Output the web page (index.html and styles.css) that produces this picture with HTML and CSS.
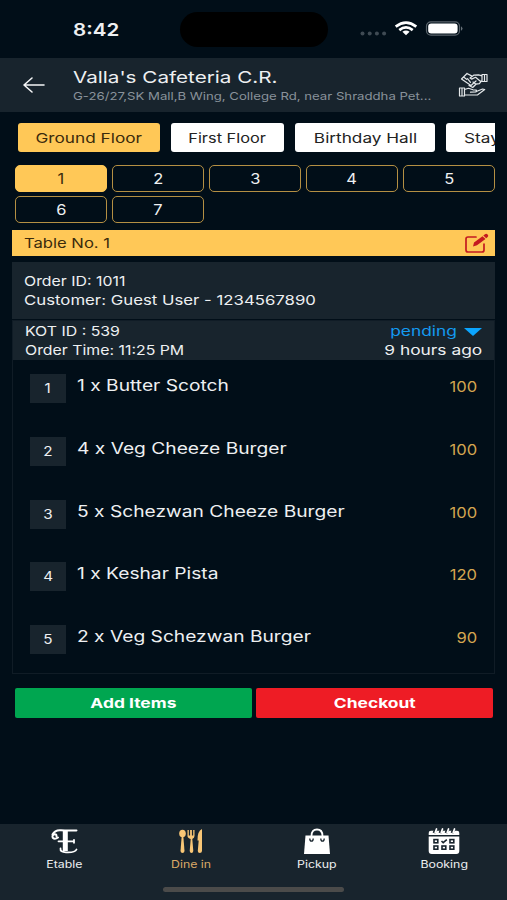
FILE: index.html
```html
<!DOCTYPE html>
<html lang="en">

<head>
    <meta charset="utf-8">
    <meta name="viewport" content="width=device-width, initial-scale=1.0">
    <title>Dine in</title>
    <link rel="stylesheet" href="styles.css">
</head>

<body>
    <div class="status">
        <span class="clock"><span class="wide">8:42</span></span>
        <div class="island"></div>
        <svg class="status-icons" width="104" height="20" viewBox="0 0 104 20">
            <g fill="#3f4a53">
                <circle cx="3.5" cy="14.5" r="2" />
                <circle cx="10.7" cy="14.5" r="2" />
                <circle cx="17.9" cy="14.5" r="2" />
                <circle cx="25.1" cy="14.5" r="2" />
            </g>
            <g fill="none" stroke="#fff" stroke-width="2.7">
                <path d="M36.7 7.6Q47 -.5 57.3 7.6" />
                <path d="M40.3 11.1Q47 5.6 53.7 11.1" />
            </g>
            <path d="M43.4 12.7Q47 10.2 50.6 12.7L47 16.2Z" fill="#fff" />
            <rect x="67.5" y="2.8" width="33" height="13.4" rx="4.4" fill="none" stroke="#59636b" stroke-width="1.2" />
            <rect x="69.2" y="4.5" width="29.4" height="10" rx="3" fill="#fff" />
            <path d="M102 7.2Q105 9.5 102 11.8Z" fill="#68727a" />
        </svg>
    </div>

    <header>
        <svg class="back" width="24" height="18" viewBox="0 0 24 18" fill="none" stroke="#f4f5f6" stroke-width="1.6" stroke-linecap="round" stroke-linejoin="round">
            <path d="M22 9H2M10 2L2 9l8 7" />
        </svg>
        <div class="place">
            <h1><span class="wide">Valla's Cafeteria C.R.</span></h1>
            <p><span class="wide">G-26/27,SK Mall,B Wing, College Rd, near Shraddha Pet...</span></p>
        </div>
        <svg class="hands" width="32" height="26" viewBox="0 0 32 26" fill="none" stroke="#e4e8ea" stroke-width="1.2" stroke-linejoin="round" stroke-linecap="round">
            <path d="M24 2.500h5v7h-5zM26.500 2.500v7M24 3.800l-3.500-1-4.500.3-4 3 1.600 1 4-1.800 5 4.200 1.400-.8" />
            <path d="M9 1.500L3.500 7l9.500 6.500 5-4.500M9 1.500l4.500 2.400M6.200 5.600l2.400 1.700M15 10l3 2.200 3.400-.6 1.700-2.200M9.500 6.700l3 3.700M11 13.500l3.700 2 3.500-3.500" />
            <path d="M1.500 16h5v8h-5zM4 16v8M6.500 17.500l4-1.200 4.500 1.500 3.300.2-.2 1.800-5.600.3M18.300 19.500l6.200-2.500 2.200.6-7 5.200-13.200.2" />
        </svg>
    </header>

    <nav class="floors">
        <button class="floor active"><span class="wide">Ground Floor</span></button>
        <button class="floor first"><span class="wide">First Floor</span></button>
        <button class="floor hall"><span class="wide">Birthday Hall</span></button>
        <button class="floor stay"><span class="wide">Stay</span></button>
    </nav>

    <div class="tables">
        <button class="active"><span class="wide">1</span></button>
        <button><span class="wide">2</span></button>
        <button><span class="wide">3</span></button>
        <button><span class="wide">4</span></button>
        <button><span class="wide">5</span></button>
        <button><span class="wide">6</span></button>
        <button><span class="wide">7</span></button>
    </div>

    <main>
        <div class="table-title">
            <span class="wide">Table No. 1</span>
            <svg width="25" height="21" viewBox="0 0 25 21" fill="none">
                <path d="M12 4H4Q2 4 2 6v11q0 2 2 2h14q2 0 2-2v-6" stroke="#c41a20" stroke-width="1.7" stroke-linecap="round" />
                <path d="M9 13.5l1-4L18.500 3.200l3 2.700-8.500 6.400z" fill="#c41a20" />
                <path d="M19.300 2.600L21 1.200Q22.300.2 23.600 1.400T23.700 4l-1.500 1.300z" fill="#c41a20" />
            </svg>
        </div>

        <div class="order">
            <p><span class="wide">Order ID: 1011</span></p>
            <p><span class="wide customer">Customer: Guest User - 1234567890</span></p>
        </div>

        <section class="kot">
            <div class="kot-head">
                <div>
                    <p><span class="wide">KOT ID : 539</span></p>
                    <p><span class="wide">Order Time: 11:25 PM</span></p>
                </div>
                <div class="state">
                    <p class="pending"><span class="wide">pending</span><i class="arrow"></i></p>
                    <p><span class="wide">9 hours ago</span></p>
                </div>
            </div>
            <ul>
                <li><span class="no"><span class="wide">1</span></span><span class="item"><span class="wide">1 x Butter Scotch</span></span><span class="price wide">100</span></li>
                <li><span class="no"><span class="wide">2</span></span><span class="item"><span class="wide">4 x Veg Cheeze Burger</span></span><span class="price wide">100</span></li>
                <li><span class="no"><span class="wide">3</span></span><span class="item"><span class="wide">5 x Schezwan Cheeze Burger</span></span><span class="price wide">100</span></li>
                <li><span class="no"><span class="wide">4</span></span><span class="item"><span class="wide">1 x Keshar Pista</span></span><span class="price wide">120</span></li>
                <li><span class="no"><span class="wide">5</span></span><span class="item"><span class="wide">2 x Veg Schezwan Burger</span></span><span class="price wide">90</span></li>
            </ul>
        </section>

        <div class="actions">
            <button class="add"><span class="wide">Add Items</span></button>
            <button class="checkout"><span class="wide">Checkout</span></button>
        </div>
    </main>

    <footer>
        <div class="menu">
            <a class="link">
                <svg width="30" height="27" viewBox="0 0 30 27" fill="none" stroke="#fff" stroke-linecap="round">
                    <path d="M7.500 8.300Q7.500 5.800 5.500 6.200 2.600 7.200 3.800 9.800 5.800 11.800 9 9.500" stroke-width="2" />
                    <path d="M3.500 6.500Q6 1.600 12 2.200T27.500 2.400" stroke-width="2" />
                    <path d="M16.300 3v20" stroke-width="5" stroke-linecap="butt" />
                    <path d="M9.500 13.300H25M25 11.800v3M11.500 20.500Q11 24.300 17 24.300 26 24.800 27.500 21.500" stroke-width="1.8" />
                </svg>
                <span class="wide">Etable</span>
            </a>
            <a class="link current">
                <svg width="26" height="27" viewBox="0 0 26 27" fill="#f8c676">
                    <ellipse cx="4.500" cy="5.500" rx="3.300" ry="3.800" />
                    <path d="M3.700 8h1.600l1.200 15q-.2 2-2 2t-2-2z" />
                    <path d="M9.500 2h1.300v5.500h1.300V2h1.800v5.500h1.300V2h1.300v6q0 2.200-2.200 3l1 12q-.2 2-1.800 2t-1.800-2l1-12Q9.500 10.200 9.500 8z" />
                    <path d="M19.500 12.500Q19.300 3 24 1v22q-.2 2-2.200 2t-2-2l.9-10.500z" />
                </svg>
                <span class="wide">Dine in</span>
            </a>
            <a class="link">
                <svg width="28" height="27" viewBox="0 0 28 27">
                    <path d="M2.500 7.500h23L27 26H1z" fill="#fff" />
                    <path d="M8.500 10V8q0-6.500 5.500-6.500T19.500 8v2" fill="none" stroke="#fff" stroke-width="1.8" />
                    <path d="M6.800 10.500q0 2.700 1.700 2.700t1.700-2.700M17.800 10.500q0 2.700 1.700 2.700t1.700-2.700" fill="none" stroke="#18242d" stroke-width="1.3" />
                </svg>
                <span class="wide">Pickup</span>
            </a>
            <a class="link">
                <svg width="32" height="27" viewBox="0 0 32 27">
                    <path d="M.7 7V5q0-2.300 2.300-2.300h26q2.300 0 2.300 2.300v2z" fill="#fff" />
                    <path d="M.7 8.600h30.600V23q0 3-3 3H3.700q-3 0-3-3z" fill="#fff" />
                    <path d="M6 5l1.600-3.500M12 5l1.600-3.500M18 5l1.600-3.500M24 5l1.600-3.500" stroke="#18242d" stroke-width="3" />
                    <path d="M7.200 4.500L8.500 1M13.200 4.500L14.500 1M19.200 4.500L20.500 1M25.200 4.500L26.500 1" stroke="#fff" stroke-width="1.700" stroke-linecap="round" />
                    <g fill="none" stroke="#18242d" stroke-width="1.6">
                        <rect x="6" y="11.600" width="3.800" height="3.200" />
                        <path d="M13.500 13l1.700 1.700 3.600-3" />
                        <rect x="22" y="11.600" width="3.800" height="3.200" />
                        <rect x="6" y="18" width="3.800" height="3.200" />
                        <rect x="14" y="18" width="3.800" height="3.200" />
                        <rect x="22" y="18" width="3.800" height="3.200" />
                    </g>
                </svg>
                <span class="wide">Booking</span>
            </a>
        </div>
        <div class="home"></div>
    </footer>
</body>

</html>
```

FILE: styles.css
```css
* {
    box-sizing: border-box;
}

body {
    margin: 0;
    height: 900px;
    display: flex;
    flex-direction: column;
    overflow: hidden;
    background-color: #010e18;
    color: #eef0f2;
    font-family: "Inter", "Open Sans", sans-serif;
    font-size: 13.5px;
}

h1,
p,
ul {
    margin: 0;
    padding: 0;
    font-weight: 400;
}

button {
    padding: 0;
    border: none;
    font-family: inherit;
    font-size: inherit;
    white-space: nowrap;
}

svg {
    display: block;
    flex-shrink: 0;
}

/* the type is set wider than the font */
.wide {
    display: inline-block;
    white-space: nowrap;
    transform: scaleX(1.175);
    transform-origin: left;
}

.status {
    height: 58px;
    flex-shrink: 0;
    display: flex;
    align-items: flex-start;
}

.clock {
    width: 107px;
    margin-left: 73px;
    padding-top: 19px;
    font-size: 17.5px;
    line-height: 21px;
    font-weight: 600;
}

.island {
    width: 148px;
    height: 35px;
    margin-top: 12px;
    border-radius: 18px;
    background-color: #000;
}

.status-icons {
    margin: 19px 0 0 31px;
}

header {
    height: 54px;
    flex-shrink: 0;
    display: flex;
    background-color: #18242d;
}

.back {
    margin: 18px 0 0 22px;
}

.place {
    width: 385px;
    margin-left: 27px;
    padding-top: 8px;
}

h1 {
    font-size: 16.5px;
    line-height: 22px;
}

h1 .wide {
    transform: scaleX(1.252);
}

.place p {
    color: #89929a;
    font-size: 10.8px;
    line-height: 17px;
}

.place p .wide {
    transform: scaleX(1.22);
}

.hands {
    margin-top: 14px;
}

.floors {
    height: 29px;
    margin: 11px 12px 0 18px;
    flex-shrink: 0;
    display: flex;
    gap: 11px;
    overflow: hidden;
}

.floor {
    width: 142px;
    flex-shrink: 0;
    border-radius: 3px;
    background-color: #fff;
    color: #232323;
}

.floor .wide {
    transform: scaleX(1.275);
    transform-origin: center;
}

.floor.active {
    background-color: #ffc857;
    color: #3b2b0c;
}

.floor.first {
    width: 113px;
}

.floor.first .wide {
    transform: scaleX(1.21);
}

.floor.hall {
    width: 140px;
}

.floor.stay {
    width: 80px;
    padding-left: 18px;
    text-align: left;
}

.floor.stay .wide {
    transform-origin: left;
}

.tables {
    margin: 13px 12px 0 15px;
    display: grid;
    grid-template-columns: repeat(5, 92px);
    grid-auto-rows: 27px;
    gap: 4px 5px;
}

.tables button {
    border: 1.5px solid #b48f43;
    border-radius: 5px;
    background-color: transparent;
    color: #eef0f2;
    font-size: 14px;
}

.tables .wide,
.no .wide,
.link .wide {
    transform-origin: center;
}

.tables .active {
    border-color: #ffc857;
    background-color: #ffc857;
    color: #3b2b0c;
}

main {
    margin: 7px 12px 0;
}

.table-title {
    height: 26px;
    padding: 0 6px 0 12px;
    display: flex;
    align-items: center;
    justify-content: space-between;
    background-color: #ffc857;
    color: #3b2b0c;
}

.table-title .wide {
    transform: scaleX(1.23);
}

.order {
    height: 57px;
    margin-top: 6px;
    padding: 10px 12px;
    background-color: #18242d;
    line-height: 19px;
}

.customer {
    transform: scaleX(1.242);
}

.kot {
    height: 354px;
    margin-top: 1px;
    border: 1px solid #101c26;
}

.kot-head {
    height: 39px;
    padding: 1px 12px 0;
    display: flex;
    justify-content: space-between;
    background-color: #18242d;
    line-height: 19px;
}

.state {
    text-align: right;
}

.state .wide {
    transform: scaleX(1.285);
    transform-origin: right;
}

.pending {
    display: flex;
    align-items: center;
    justify-content: flex-end;
    color: #149af0;
}

.arrow {
    margin-left: 7px;
    border: 9px solid transparent;
    border-top: 8px solid #0ba5ff;
    border-bottom: none;
}

ul {
    padding: 14px 17px 0;
    list-style: none;
}

li {
    height: 62.75px;
    display: flex;
}

.no {
    width: 36px;
    height: 29px;
    background-color: #18242d;
    font-size: 13px;
    line-height: 29px;
    text-align: center;
}

.item {
    flex: 1;
    margin-left: 11px;
    font-size: 15.5px;
    line-height: 23px;
}

.item .wide {
    transform: scaleX(1.238);
}

.price {
    color: #d5a650;
    font-size: 14.5px;
    line-height: 25px;
    transform: scaleX(1.14);
    transform-origin: right;
}

.actions {
    margin: 14px 2px 0 3px;
    display: flex;
    gap: 4px;
}

.actions button {
    flex: 1;
    height: 30px;
    border-radius: 2px;
    background-color: #00a650;
    color: #fff;
    font-weight: 700;
}

.actions .wide {
    transform: scaleX(1.29);
    transform-origin: center;
}

.actions .checkout {
    background-color: #ee1c25;
}

footer {
    height: 76px;
    margin-top: auto;
    flex-shrink: 0;
    background-color: #18242d;
}

.menu {
    display: grid;
    grid-template-columns: repeat(4, 126.5px);
    padding: 4px 0 0 1px;
}

.link {
    display: flex;
    flex-direction: column;
    align-items: center;
    font-size: 10.5px;
    line-height: 20px;
}

.current {
    color: #dba967;
}

.home {
    width: 181px;
    height: 5px;
    margin: 12px auto 0;
    border-radius: 3px;
    background-color: #4b4b4a;
}
```
